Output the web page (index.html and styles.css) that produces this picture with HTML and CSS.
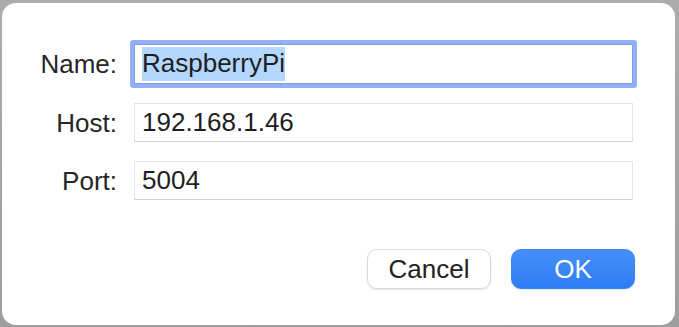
FILE: index.html
```html
<!DOCTYPE html>
<html>
<head>
<meta charset="utf-8">
<link rel="stylesheet" href="styles.css">
</head>
<body>
<div class="dialog">
  <div class="form">
    <label class="label">Name:</label>
    <div class="field focused"><span class="sel">RaspberryPi</span></div>
    <label class="label">Host:</label>
    <div class="field">192.168.1.46</div>
    <label class="label">Port:</label>
    <div class="field">5004</div>
  </div>
  <div class="buttons">
    <button class="btn cancel">Cancel</button>
    <button class="btn ok">OK</button>
  </div>
</div>
</body>
</html>
```
FILE: styles.css
```css
html, body {
  margin: 0;
  padding: 0;
}
body {
  width: 679px;
  height: 327px;
  background: linear-gradient(#acacac, #9e9e9e);
  font-family: "Liberation Sans", Arial, sans-serif;
  font-size: 26px;
  color: #242424;
  overflow: hidden;
}
.dialog {
  box-sizing: border-box;
  margin: 3px 0 0 2px;
  width: 673px;
  height: 322px;
  background: #ffffff;
  border-radius: 14px;
  padding: 41px 40px 36px 0;
  display: flex;
  flex-direction: column;
}
.form {
  display: grid;
  grid-template-columns: 115px 499px;
  column-gap: 17px;
  row-gap: 19px;
  align-items: center;
}
.label {
  text-align: right;
  color: #262626;
  line-height: 30px;
}
.field {
  box-sizing: border-box;
  height: 39px;
  border: 1px solid #e4e4e4;
  border-bottom-color: #d2d2d2;
  background: #fff;
  padding: 0 0 0 7px;
  display: flex;
  align-items: center;
  color: #1e1e1e;
  white-space: nowrap;
}
.field.focused {
  height: 40px;
  border: 1px solid #7f9fea;
  border-radius: 1px;
  box-shadow: 0 0 0 4px #92b1f5;
}
.sel {
  background: #b3d7ff;
  padding: 1px 0 2px;
}
.buttons {
  margin-top: auto;
  display: flex;
  justify-content: flex-end;
  gap: 20px;
}
.btn {
  box-sizing: border-box;
  width: 124px;
  height: 40px;
  border-radius: 10px;
  font-family: inherit;
  font-size: 26px;
  padding: 0;
  line-height: 38px;
}
.cancel {
  background: #fff;
  border: 1px solid #dadada;
  box-shadow: 0 1px 2px rgba(0, 0, 0, 0.12);
  color: #222;
}
.ok {
  background: linear-gradient(#4590f8, #2f7cf5);
  border: 1px solid #3a84f6;
  color: #fff;
  box-shadow: 0 1px 2px rgba(0, 0, 0, 0.1);
}
```
